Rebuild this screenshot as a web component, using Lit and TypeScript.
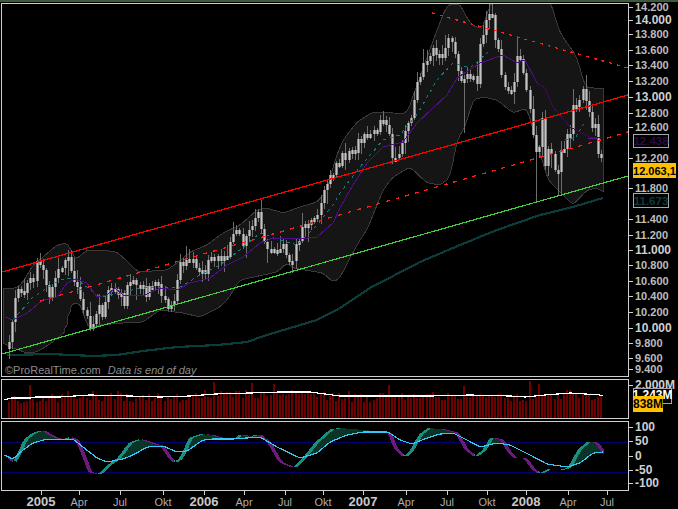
import { LitElement, html, svg, css } from 'lit';
import { customElement } from 'lit/decorators.js';

type Pt = [number, number];

// all curves are in page pixels, read off the reference
const CLOSE: Pt[] = [[8,347],[11,333],[14,300],[20,290],[24,289],[30,282],[34,275],[38,264],[42,272],[45,283],[50,297],[54,285],[57,270],[62,268],[68,262],[72,272],[75,285],[80,300],[85,313],[90,325],[94,318],[98,310],[103,312],[108,290],[115,290],[120,296],[125,305],[128,280],[134,282],[140,285],[145,292],[150,290],[155,278],[160,295],[165,302],[168,310],[172,310],[175,292],[178,270],[185,258],[190,262],[195,265],[200,266],[205,270],[210,262],[215,255],[220,262],[225,262],[230,246],[235,235],[240,240],[245,243],[250,228],[257,215],[261,225],[265,240],[272,255],[277,252],[282,245],[286,258],[290,268],[295,250],[300,235],[305,228],[310,220],[316,212],[322,200],[330,178],[337,165],[343,157],[350,153],[360,143],[368,133],[378,127],[385,117],[388,124],[392,160],[397,155],[402,143],[408,128],[413,107],[417,80],[425,57],[429,60],[433,53],[440,60],[445,45],[450,30],[454,45],[457,67],[463,80],[468,70],[473,78],[477,83],[480,40],[488,20],[493,13],[495,40],[498,50],[503,90],[508,95],[512,97],[517,50],[523,70],[528,100],[532,123],[535,160],[539,150],[542,117],[545,160],[550,147],[554,165],[557,180],[562,147],[566,140],[570,130],[573,110],[578,100],[582,93],[588,100],[592,127],[597,127],[598,157],[603,163]];
const BB_UP: Pt[] = [[3,288],[17,288],[23,282],[33,265],[43,257],[57,245],[68,243],[75,260],[87,250],[100,250],[117,252],[128,262],[138,272],[167,270],[177,263],[190,252],[207,245],[223,233],[240,225],[257,210],[267,208],[283,213],[300,207],[317,202],[327,190],[335,160],[343,140],[357,122],[373,112],[390,113],[407,113],[420,77],[437,30],[447,5],[460,4],[468,20],[475,27],[483,28],[488,10],[493,0],[550,0],[553,10],[560,33],[577,57],[585,87],[603,89]];
const BB_DN: Pt[] = [[3,343],[13,348],[27,353],[37,352],[53,342],[67,330],[68,313],[72,303],[80,303],[88,328],[100,325],[123,323],[143,322],[160,310],[183,313],[200,317],[220,307],[230,297],[233,290],[240,280],[277,272],[287,263],[293,268],[323,273],[333,282],[340,278],[350,258],[360,240],[367,230],[375,210],[383,190],[393,177],[410,167],[427,183],[440,185],[450,178],[457,140],[465,127],[473,100],[483,97],[497,100],[513,113],[527,108],[537,143],[548,180],[563,195],[573,205],[587,190],[597,188],[603,192]];
const LONG_MA: Pt[] = [[7,355],[50,354],[93,356],[117,355],[143,351],[177,347],[217,345],[247,342],[267,335],[290,328],[317,320],[340,308],[370,288],[420,262],[460,245],[497,230],[540,215],[573,207],[603,198]];
const PURPLE: Pt[] = [[5,317],[13,320],[27,313],[43,300],[57,297],[67,283],[75,279],[87,283],[97,297],[107,295],[115,288],[123,295],[143,296],[160,288],[177,290],[190,283],[210,278],[227,265],[243,257],[260,243],[273,238],[300,239],[317,237],[333,223],[340,208],[350,190],[367,163],[383,147],[403,142],[417,123],[447,95],[457,78],[480,63],[503,55],[517,63],[525,60],[537,83]];
const PURPLE_DARK: Pt[] = [[537,83],[545,88],[553,107],[570,127],[590,137],[602,138]];
const TEAL: Pt[] = [[13,320],[33,297],[60,280],[75,278],[100,297],[120,293],[140,288],[160,287],[180,287],[200,275],[220,265],[240,250],[260,233],[280,240],[297,245],[317,225],[333,205],[340,193],[360,167],[383,140],[400,135],[418,113],[437,80],[453,63],[470,68],[488,52]];
const TEAL_END: Pt[] = [[565,140],[575,138],[585,122]];
const OSC_K: Pt[] = [[4,455],[12,463],[17,453],[23,440],[30,434],[40,430],[50,436],[60,440],[68,437],[75,440],[82,457],[88,473],[98,474],[107,465],[117,458],[128,443],[138,439],[150,443],[160,446],[167,457],[173,463],[180,457],[188,438],[200,434],[210,435],[223,439],[233,439],[240,434],[248,437],[257,434],[267,443],[278,462],[292,468],[302,458],[315,442],[330,429],[340,428],[363,430],[375,431],[387,432],[393,448],[402,457],[408,453],[418,435],[427,428],[440,429],[455,433],[463,448],[473,457],[482,450],[490,437],[500,440],[507,452],[513,458],[523,458],[530,468],[537,474],[547,469],[558,470],[567,468],[577,450],[587,441],[595,443],[603,455]];
const OSC_D: Pt[] = [[4,455],[13,459],[23,450],[33,443],[47,439],[57,440],[73,439],[83,447],[97,458],[107,462],[123,459],[133,455],[147,447],[163,446],[177,452],[187,451],[203,440],[213,439],[233,439],[260,437],[277,447],[300,458],[317,453],[330,442],[347,435],[363,432],[388,432],[400,440],[412,444],[427,438],[440,434],[453,433],[467,440],[480,447],[497,443],[510,445],[530,455],[547,464],[567,467],[580,463],[593,453],[603,452]];
const VOL_MA: Pt[] = [[4,400],[12,398],[30,398],[36,397],[60,397],[90,395],[130,396],[160,397],[190,396],[215,394],[250,393],[280,392],[310,392],[340,396],[370,396],[400,396],[430,396],[470,395],[510,396],[525,397],[545,395],[570,393],[600,395],[603,396]];

const RIGHT_LABELS: Array<[string, number, boolean]> = [
  ['14.200', 7, false], ['14.000', 20, true], ['13.800', 34, false], ['13.600', 50, false],
  ['13.400', 65, false], ['13.200', 81, false], ['13.000', 97, true], ['12.800', 113, false],
  ['12.600', 127, false], ['12.200', 158, false], ['11.800', 188, false], ['11.400', 219, false],
  ['11.200', 235, false], ['11.000', 250, true], ['10.800', 265, false], ['10.600', 281, false],
  ['10.400', 296, false], ['10.200', 312, false], ['10.000', 328, true], ['9.800', 343, false],
  ['9.600', 358, false], ['9.400', 369, false],
];
const OSC_LABELS: Array<[string, number]> = [['100', 427], ['50', 441], ['0', 456], ['-50', 470], ['-100', 483]];
const TIME_LABELS: Array<[string, number, boolean]> = [
  ['2005', 41, true], ['Apr', 79, false], ['Jul', 120, false], ['Okt', 163, false],
  ['2006', 204, true], ['Apr', 244, false], ['Jul', 285, false], ['Okt', 323, false],
  ['2007', 363, true], ['Apr', 406, false], ['Jul', 447, false], ['Okt', 487, false],
  ['2008', 526, true], ['Apr', 568, false], ['Jul', 607, false],
];
const LONG_WICKS: Record<number, [number, number]> = { 465: [0, 133], 490: [3, 0], 537: [0, 201], 518: [37, 0], 260: [200, 0], 557: [0, 195], 562: [0, 195] };

function rng(seed: number) {
  let a = seed;
  return () => {
    a = (a + 0x6d2b79f5) | 0;
    let t = Math.imul(a ^ (a >>> 15), 1 | a);
    t = (t + Math.imul(t ^ (t >>> 7), 61 | t)) ^ t;
    return ((t ^ (t >>> 14)) >>> 0) / 4294967296;
  };
}

function at(pts: Pt[], x: number) {
  if (x <= pts[0][0]) return pts[0][1];
  for (let i = 1; i < pts.length; i++) {
    if (x <= pts[i][0]) {
      const [x0, y0] = pts[i - 1];
      const [x1, y1] = pts[i];
      return y0 + ((y1 - y0) * (x - x0)) / (x1 - x0);
    }
  }
  return pts[pts.length - 1][1];
}

const line = (pts: Pt[]) => pts.map(p => `${p[0]},${p[1]}`).join(' ');

function sampled(pts: Pt[], from: number, to: number, spread = 2) {
  const out: Pt[] = [];
  for (let x = from; x <= to; x++) {
    out.push([x, (at(pts, x - spread) + at(pts, x) * 2 + at(pts, x + spread)) / 4]);
  }
  return out;
}

const STEP = 3.12;
const COUNT = 191;
const xOf = (i: number) => Math.round(8.5 + i * STEP);

function buildCandles() {
  const r = rng(11);
  let prev = 349;
  const items = [];
  for (let i = 0; i < COUNT; i++) {
    const x = xOf(i);
    const close = at(CLOSE, x) + (r() - 0.5) * 12;
    const top = Math.min(prev, close);
    const bot = Math.max(prev, close);
    const over = Object.entries(LONG_WICKS).find(([k]) => Math.abs(+k - x) < 2)?.[1];
    const hi = over && over[0] ? over[0] : top - 2 - r() * r() * 16;
    const lo = over && over[1] ? over[1] : bot + 2 + r() * r() * 16;
    items.push({ x, top, bot: Math.max(bot, top + 4), hi, lo });
    prev = close;
  }
  return items;
}

function buildVolume() {
  const r = rng(5);
  const peaks: Record<number, number> = { 213: 382, 31: 385, 252: 383, 274: 384, 530: 381, 389: 385, 464: 386, 539: 384 };
  const items = [];
  for (let i = 0; i < COUNT; i++) {
    const x = xOf(i);
    const peak = Object.entries(peaks).find(([k]) => Math.abs(+k - x) < 2)?.[1];
    const top = peak ?? Math.round(at(VOL_MA, x) - 3 + r() * 9 - (r() > 0.85 ? 4 : 0));
    items.push({ x, top });
  }
  return items;
}

const candles = buildCandles();
const volume = buildVolume();
const K = sampled(OSC_K, 4, 603);
const D = sampled(OSC_D, 4, 603);
const band = [...sampled(BB_UP, 3, 603, 3), ...sampled(BB_DN, 3, 603, 3).reverse()];

@customElement('app-root')
export class AppRoot extends LitElement {
  static styles = css`
    :host {
      display: flex;
      flex-direction: column;
      gap: 2px;
      box-sizing: border-box;
      width: 678px;
      height: 509px;
      padding: 1px 0 0 1px;
      position: relative;
      overflow: hidden;
      background: #000;
      border-top: 2px solid #3d5a3d;
      font-family: 'Liberation Sans', Arial, sans-serif;
      color: #c4c4c4;
    }
    .pane {
      display: flex;
      flex: none;
    }
    .main { height: 374px; }
    .vol { height: 40px; }
    .osc { height: 70px; }
    .plot {
      position: relative;
      flex: none;
      box-sizing: border-box;
      width: 628px;
      height: 100%;
      border: 1px solid #cfcfcf;
    }
    svg {
      display: block;
      width: 100%;
      height: 100%;
      shape-rendering: crispEdges;
    }
    .axis {
      position: relative;
      flex: 1;
    }
    .tag {
      position: absolute;
      left: 6px;
      line-height: 12px;
      font-size: 11px;
      font-weight: bold;
      white-space: nowrap;
      transform: translateY(-50%);
      color: #bdbdbd;
    }
    .tag.big {
      font-size: 12px;
      color: #cfcfcf;
    }
    .tag::before {
      content: '';
      position: absolute;
      left: -6px;
      top: 6px;
      width: 4px;
      height: 1px;
      background: #cfcfcf;
    }
    .box {
      position: absolute;
      left: 4px;
      box-sizing: border-box;
      display: flex;
      align-items: center;
      justify-content: center;
      border: 1px solid #a8a8a8;
      background: #000;
      font-size: 11.5px;
      font-weight: bold;
    }
    .box.purple {
      top: 131px;
      width: 36px;
      height: 14px;
      color: #2c0b3f;
    }
    .box.teal {
      top: 190px;
      width: 36px;
      height: 15px;
      color: #0d3a3a;
    }
    .box.last {
      top: 160px;
      width: 43px;
      height: 15px;
      border: 0;
      background: #ffc000;
      color: #000;
      font-size: 11px;
    }
    .box.vol-ma {
      top: 9px;
      width: 39px;
      height: 16px;
      align-items: flex-start;
      color: #fff;
      font-size: 12px;
      line-height: 12px;
    }
    .box.vol-last {
      top: 17px;
      width: 30px;
      height: 16px;
      border: 0;
      background: #ffc000;
      color: #000;
      font-size: 12px;
    }
    .credit {
      position: absolute;
      left: 3px;
      top: 360px;
      font-size: 11px;
      line-height: 13px;
      color: #8c8c8c;
      white-space: pre;
    }
    .credit em { margin-left: 4px; }
    .time {
      position: relative;
      flex: 1;
      width: 628px;
      margin-top: -2px;
    }
    .time span {
      position: absolute;
      top: 4px;
      transform: translateX(-50%);
      font-size: 11px;
      line-height: 14px;
      color: #adadad;
    }
    .time span.year {
      font-size: 13px;
      font-weight: bold;
      color: #c8c8c8;
    }
    .time i {
      position: absolute;
      top: 0;
      width: 1px;
      height: 4px;
      background: #cfcfcf;
    }
  `;

  private renderMain() {
    return svg`
      <svg viewBox="2 4 626 372">
        <polygon points="${line(band)}" fill="#151515" stroke="#3a3a3a" stroke-width="1" />
        <polyline points="${line(LONG_MA)}" fill="none" stroke="#0c3d3d" stroke-width="2.2" />
        ${candles.map(c => svg`
          <rect x="${c.x}" y="${c.hi}" width="1" height="${c.lo - c.hi}" fill="#6e6e6e" />
          <rect x="${c.x - 1}" y="${c.top}" width="3" height="${c.bot - c.top}" fill="#858585" />
          <rect x="${c.x}" y="${c.top}" width="1" height="${c.bot - c.top}" fill="#c4c4c4" />
        `)}
        <polyline points="${line(TEAL)}" fill="none" stroke="#0f7f7f" stroke-width="1" stroke-dasharray="3 4" />
        <polyline points="${line(TEAL_END)}" fill="none" stroke="#0f7f7f" stroke-width="1" stroke-dasharray="3 3" />
        <polyline points="${line(PURPLE)}" fill="none" stroke="#4e1088" stroke-width="1" />
        <polyline points="${line(PURPLE_DARK)}" fill="none" stroke="#3d0b55" stroke-width="1" />
        <line x1="588" y1="138" x2="598" y2="138" stroke="#5a1494" />
        <line x1="2" y1="272" x2="628" y2="95" stroke="#ff0000" stroke-width="1.25" />
        <line x1="40" y1="301" x2="628" y2="132" stroke="#ff1c1c" stroke-width="1.3" stroke-dasharray="4 6" />
        <line x1="432" y1="13" x2="628" y2="68" stroke="#ff1c1c" stroke-width="1.3" stroke-dasharray="3 5" />
        <line x1="2" y1="354" x2="628" y2="176" stroke="#3fd03f" stroke-width="1.2" />
      </svg>
    `;
  }

  private renderVolume() {
    return svg`
      <svg viewBox="2 380 626 38">
        ${volume.map(v => svg`<rect x="${v.x - 1}" y="${v.top}" width="2" height="${418 - v.top}" fill="#6e0000" />`)}
        <polyline points="${line(VOL_MA)}" fill="none" stroke="#ffffff" stroke-width="1.2" />
      </svg>
    `;
  }

  private renderOsc() {
    const fill = K.filter((p, i) => p[1] < D[i][1] - 0.5)
      .map(p => `M${p[0]} ${p[1]}V${at(D, p[0])}`).join('');
    let up = '';
    let down = '';
    K.forEach((p, i) => {
      if (i < 4) return;
      const seg = `M${p[0]} ${p[1]}V${K[i - 4][1]}`;
      if (p[1] < K[i - 1][1]) up += seg;
      else if (K[i - 4][1] < p[1] - 0.4) down += seg;
    });
    return svg`
      <svg viewBox="2 422 626 68">
        <line x1="2" y1="442" x2="628" y2="442" stroke="#000070" />
        <line x1="2" y1="472" x2="628" y2="472" stroke="#000070" />
        <path d="${fill}" stroke="#0a3526" stroke-width="1" fill="none" />
        <path d="${up}" stroke="#1b8f7e" stroke-width="1" fill="none" />
        <path d="${down}" stroke="#6b1a7d" stroke-width="1" fill="none" />
        <polyline points="${line(D)}" fill="none" stroke="#36c8f5" stroke-width="1.2" />
      </svg>
    `;
  }

  render() {
    return html`
      <div class="pane main">
        <div class="plot">
          ${this.renderMain()}
          <div class="credit">©ProRealTime.com <em>Data is end of day</em></div>
        </div>
        <div class="axis">
          ${RIGHT_LABELS.map(([t, y, big]) => html`
            <span class="tag ${big ? 'big' : ''}" style="top:${y - 3}px">${t}</span>
          `)}
          <div class="box purple">12.438</div>
          <div class="box teal">11.673</div>
          <div class="box last">12.063,1</div>
        </div>
      </div>
      <div class="pane vol">
        <div class="plot">${this.renderVolume()}</div>
        <div class="axis">
          <span class="tag big" style="top:6px">2.000M</span>
          <div class="box vol-ma">1.243M</div>
          <div class="box vol-last">838M</div>
        </div>
      </div>
      <div class="pane osc">
        <div class="plot">${this.renderOsc()}</div>
        <div class="axis">
          ${OSC_LABELS.map(([t, y]) => html`<span class="tag big" style="top:${y - 421}px">${t}</span>`)}
        </div>
      </div>
      <div class="time">
        ${TIME_LABELS.map(([t, x, year]) => html`
          <i style="left:${x - 1}px"></i>
          <span class="${year ? 'year' : ''}" style="left:${x - 1}px">${t}</span>
        `)}
      </div>
    `;
  }
}
